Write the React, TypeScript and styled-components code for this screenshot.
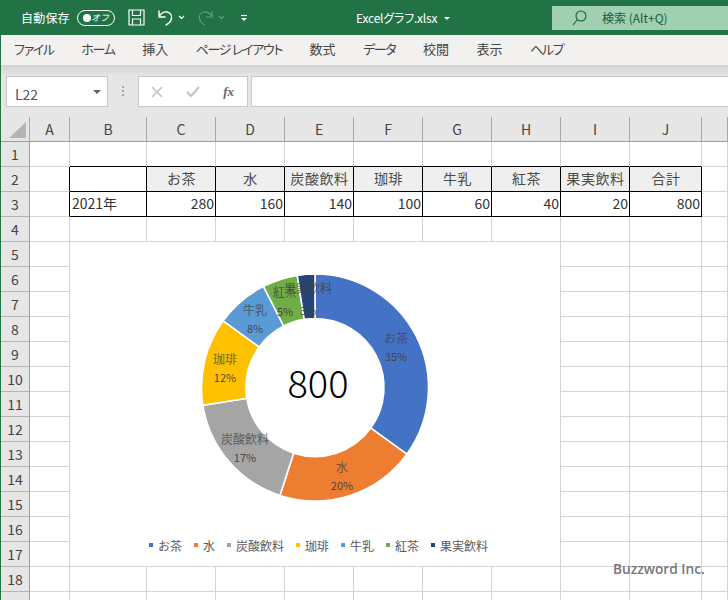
import styled, { createGlobalStyle } from "styled-components";

const JP = `"Noto Sans CJK JP", "Noto Sans", sans-serif`;

const GlobalStyle = createGlobalStyle`
  html, body {
    margin: 0;
    padding: 0;
    background: #fff;
  }
  * {
    box-sizing: border-box;
  }
`;

const Page = styled.div`
  position: relative;
  width: 728px;
  height: 600px;
  overflow: hidden;
  font-family: ${JP};
  border-left: 1px solid #217346;
`;

const TitleBar = styled.div`
  display: flex;
  align-items: center;
  height: 35px;
  padding-left: 21px;
  background: #217346;
  color: #fff;
  margin-left: -1px;
`;

const AutoSave = styled.span`
  width: 56px;
  font-size: 12px;
  font-feature-settings: "palt";
  letter-spacing: 0.2px;
`;

const Toggle = styled.div`
  display: flex;
  align-items: center;
  justify-content: space-between;
  width: 38px;
  height: 16px;
  padding: 0 5px 0 5px;
  margin-right: 13px;
  border: 1px solid #fff;
  border-radius: 8px;
  font-size: 9px;
  font-style: italic;
  &::before {
    content: "";
    width: 8px;
    height: 8px;
    border-radius: 50%;
    background: #fff;
  }
`;

const QuickIcon = styled.svg<{ $dim?: boolean; $gap: number }>`
  flex: none;
  margin-right: ${(p) => p.$gap}px;
  fill: none;
  stroke: #fff;
  stroke-width: 1.2;
  opacity: ${(p) => (p.$dim ? 0.3 : 1)};
`;

const FileName = styled.div`
  display: flex;
  align-items: center;
  width: 196px;
  margin-left: 108px;
  font-size: 12px;
  font-feature-settings: "palt";
  letter-spacing: -0.2px;
  &::after {
    content: "";
    margin-left: 7px;
    margin-top: 2px;
    border: 3px solid transparent;
    border-top: 3px solid #fff;
    border-bottom: 0;
  }
`;

const SearchBox = styled.div`
  display: flex;
  align-items: center;
  flex: 1;
  height: 24px;
  padding-left: 20px;
  background: #a0cfb1;
  color: #1d5c39;
  font-size: 12px;
  gap: 15px;
`;

const MenuBar = styled.nav`
  display: flex;
  align-items: center;
  gap: 27.5px;
  height: 30px;
  padding: 0 0 3px 13px;
  background: #f3f1f0;
  color: #444;
  font-size: 13px;
  font-feature-settings: "palt";
`;

const MenuItem = styled.span<{ $kana?: boolean }>`
  letter-spacing: ${(p) => (p.$kana ? "-1.3px" : "0")};
  white-space: nowrap;
`;

const FormulaArea = styled.div`
  display: flex;
  align-items: flex-start;
  height: 52px;
  padding: 11px 0 0 5px;
  background: linear-gradient(#d2d2d2, #e6e6e6 11px);
`;

const NameBox = styled.div`
  display: flex;
  align-items: center;
  justify-content: space-between;
  width: 102px;
  height: 31px;
  padding: 5px 6px 0 8px;
  background: #fff;
  border: 1px solid #c8c8c8;
  color: #555;
  font-size: 14px;
  &::after {
    content: "";
    margin-top: -5px;
    border: 4px solid transparent;
    border-top: 4px solid #666;
    border-bottom: 0;
  }
`;

const Grip = styled.div`
  width: 2px;
  height: 10px;
  margin: 10px 14px 0 14px;
  border-left: 2px dotted #aaa;
`;

const FormulaButtons = styled.div`
  display: flex;
  align-items: center;
  justify-content: space-between;
  width: 110px;
  height: 31px;
  padding: 0 13px 0 12px;
  margin-right: 3px;
  background: #fff;
  border: 1px solid #c8c8c8;
`;

const FxLabel = styled.span`
  font-family: "Liberation Serif", serif;
  font-size: 13px;
  font-style: italic;
  font-weight: 700;
  color: #666;
`;

const FormulaInput = styled.div`
  flex: 1;
  height: 31px;
  background: #fff;
  border: 1px solid #c8c8c8;
  border-right: 0;
`;

const Sheet = styled.div`
  display: grid;
  grid-template-columns: 29px 40px 77px 69px 69px 69px 69px 69px 69px 69px 72px 26px;
  grid-auto-rows: 25px;
  color: #333;
  font-size: 14px;
`;

const Corner = styled.div`
  display: flex;
  align-items: flex-end;
  justify-content: flex-end;
  padding: 0 3px 3px 0;
  background: #e6e6e6;
  border-right: 1px solid #a8a8a8;
  border-bottom: 1px solid #9c9c9c;
  &::after {
    content: "";
    border-style: solid;
    border-width: 0 0 16px 17px;
    border-color: transparent transparent #b4b4b4 transparent;
  }
`;

const ColHead = styled.div`
  display: flex;
  align-items: center;
  justify-content: center;
  background: #e6e6e6;
  border-right: 1px solid #a8a8a8;
  border-bottom: 1px solid #9c9c9c;
  color: #444;
`;

const RowHead = styled.div`
  display: flex;
  align-items: center;
  justify-content: center;
  background: #e6e6e6;
  border-right: 1px solid #9c9c9c;
  border-bottom: 1px solid #b4b4b4;
  color: #444;
`;

const Cell = styled.div<{
  $align?: string;
  $head?: boolean;
  $right?: boolean;
  $bottom?: boolean;
}>`
  display: flex;
  align-items: center;
  justify-content: ${(p) => p.$align || "flex-start"};
  padding: 0 1px 2px 2px;
  background: ${(p) => (p.$head ? "#efefef" : "#fff")};
  border-right: 1px solid ${(p) => (p.$right ? "#000" : "#d4d4d4")};
  border-bottom: 1px solid ${(p) => (p.$bottom ? "#000" : "#d4d4d4")};
  color: ${(p) => (p.$head ? "#4a4a4a" : "#333")};
  letter-spacing: ${(p) => (p.$head ? "0.6px" : "0")};
  white-space: nowrap;
`;

const ChartPanel = styled.div`
  position: absolute;
  left: 69px;
  top: 242px;
  width: 490px;
  height: 324px;
  background: #fff;
`;

const DonutSvg = styled.svg`
  display: block;
`;

const Legend = styled.div`
  display: flex;
  align-items: center;
  height: 18px;
  padding-left: 79px;
  color: #595959;
  font-size: 12px;
`;

const LegendItem = styled.span<{ $color: string }>`
  display: flex;
  align-items: center;
  margin-right: 12px;
  white-space: nowrap;
  &::before {
    content: "";
    width: 4px;
    height: 4px;
    margin-right: 5px;
    background: ${(p) => p.$color};
  }
`;

const Watermark = styled.div`
  position: absolute;
  left: 612px;
  top: 559px;
  color: #77777a;
  font-family: "Open Sans", sans-serif;
  font-size: 13.7px;
  font-weight: 600;
  white-space: nowrap;
`;

const menus = [
  { label: "ファイル", kana: true },
  { label: "ホーム", kana: true },
  { label: "挿入" },
  { label: "ページ レイアウト", kana: true },
  { label: "数式" },
  { label: "データ", kana: true },
  { label: "校閲" },
  { label: "表示" },
  { label: "ヘルプ", kana: true },
];
const columns = ["A", "B", "C", "D", "E", "F", "G", "H", "I", "J", ""];
const headers = ["お茶", "水", "炭酸飲料", "珈琲", "牛乳", "紅茶", "果実飲料", "合計"];
const values = [280, 160, 140, 100, 60, 40, 20, 800];

// slice label positions are in chart coordinates, read off the screenshot
const slices = [
  { name: "お茶", value: 280, pct: "35%", color: "#4472c4", x: 326, y: 97, py: 115 },
  { name: "水", value: 160, pct: "20%", color: "#ed7d31", x: 272, y: 226, py: 244 },
  { name: "炭酸飲料", value: 140, pct: "17%", color: "#a5a5a5", x: 175, y: 198, py: 216 },
  { name: "珈琲", value: 100, pct: "12%", color: "#ffc000", x: 155, y: 118, py: 136 },
  { name: "牛乳", value: 60, pct: "8%", color: "#5b9bd5", x: 185, y: 69, py: 87 },
  { name: "紅茶", value: 40, pct: "5%", color: "#70ad47", x: 215, y: 51, py: 70 },
  { name: "果実飲料", value: 20, pct: "3%", color: "#264478", x: 238, y: 47, py: 69 },
];

const CX = 245;
const CY = 145.5;
const R_OUT = 113.5;
const R_IN = 69;

const point = (r: number, turn: number) => {
  const a = turn * 2 * Math.PI;
  return `${(CX + r * Math.sin(a)).toFixed(2)} ${(CY - r * Math.cos(a)).toFixed(2)}`;
};

const slicePath = (from: number, to: number) => {
  const large = to - from > 0.5 ? 1 : 0;
  return [
    `M${point(R_OUT, from)}`,
    `A${R_OUT} ${R_OUT} 0 ${large} 1 ${point(R_OUT, to)}`,
    `L${point(R_IN, to)}`,
    `A${R_IN} ${R_IN} 0 ${large} 0 ${point(R_IN, from)}`,
    "Z",
  ].join(" ");
};

const Donut = () => {
  let sum = 0;
  return (
    <DonutSvg width={490} height={294} viewBox="0 0 490 294">
      {slices.map((s) => {
        const from = sum / 800;
        sum += s.value;
        return <path key={s.name} d={slicePath(from, sum / 800)} fill={s.color} stroke="#fff" strokeWidth={1.6} />;
      })}
      {slices.map((s) => (
        <g key={s.name} fill="#404040" textAnchor="middle">
          <text x={s.x} y={s.y + 4} fontSize={12} fillOpacity={0.75}>{s.name}</text>
          <text x={s.x} y={s.py + 4} fontSize={11} fillOpacity={0.95}>{s.pct}</text>
        </g>
      ))}
      <text x={248} y={156} fontSize={38} fontWeight={300} textAnchor="middle" fill="#000">800</text>
    </DonutSvg>
  );
};

const rowCells = (row: number) => {
  const cells = [];
  for (let c = 0; c < 11; c++) {
    const inBox = c >= 1 && c <= 9;
    const isBoxRow = row === 2 || row === 3;
    const right = isBoxRow && c <= 9;
    const bottom = inBox && (row === 1 || isBoxRow);
    let text: string | number = "";
    let align = "flex-start";
    const dataIdx = c - 2;
    if (row === 2 && dataIdx >= 0 && dataIdx < 8) {
      text = headers[dataIdx];
      align = "center";
    } else if (row === 3 && c === 1) {
      text = "2021年";
    } else if (row === 3 && dataIdx >= 0 && dataIdx < 8) {
      text = values[dataIdx];
      align = "flex-end";
    }
    cells.push(
      <Cell key={c} $align={align} $head={row === 2 && dataIdx >= 0 && dataIdx < 8} $right={right} $bottom={bottom}>
        {text}
      </Cell>
    );
  }
  return cells;
};

const App = () => {
  const rows = Array.from({ length: 19 }, (_, i) => i + 1);
  return (
    <Page>
      <GlobalStyle />
      <TitleBar>
        <AutoSave>自動保存</AutoSave>
        <Toggle>オフ</Toggle>
        <QuickIcon $gap={12} width={17} height={17} viewBox="0 0 17 17">
          <path d="M1 1h15v15H1z" />
          <path d="M4.5 1v5.5h8V1M4.5 16v-6h8v6" />
        </QuickIcon>
        <QuickIcon $gap={4} width={17} height={17} viewBox="0 0 17 17" strokeLinecap="round">
          <path d="M2 2v6h6M2 7.5C4 4.5 7 2.500 10 3c3.500.6 5 3.500 4.500 6.500C14 12 12 14.500 9 16" strokeWidth={1.4} />
        </QuickIcon>
        <QuickIcon $gap={12} width={7} height={5} viewBox="0 0 7 5">
          <path d="M1 1l2.500 2.500L6 1" />
        </QuickIcon>
        <QuickIcon $dim $gap={4} width={17} height={17} viewBox="0 0 17 17">
          <path d="M15 2v6H9M15 7.500C13 4.500 10 2.500 7 3 3.500 3.600 2 6.500 2.500 9.500 3 12 5 14.500 8 16" />
        </QuickIcon>
        <QuickIcon $dim $gap={15} width={7} height={5} viewBox="0 0 7 5">
          <path d="M1 1l2.500 2.500L6 1" />
        </QuickIcon>
        <QuickIcon $gap={0} width={8} height={8} viewBox="0 0 8 8">
          <path d="M1 1.500h6" />
          <path d="M1 4l3 3 3-3z" fill="#fff" stroke="none" />
        </QuickIcon>
        <FileName>Excelグラフ.xlsx</FileName>
        <SearchBox>
          <svg width={15} height={16} viewBox="0 0 15 16" fill="none" stroke="#1d5c39" strokeWidth={1.1}>
            <circle cx={9} cy={6} r={5} />
            <path d="M5.500 9.500L1 15" />
          </svg>
          <span>検索 (Alt+Q)</span>
        </SearchBox>
      </TitleBar>
      <MenuBar>
        {menus.map((m) => (
          <MenuItem key={m.label} $kana={m.kana}>{m.label}</MenuItem>
        ))}
      </MenuBar>
      <FormulaArea>
        <NameBox>L22</NameBox>
        <Grip />
        <FormulaButtons>
          <svg width={12} height={12} viewBox="0 0 12 12" stroke="#c4c4c4" strokeWidth={1.6}>
            <path d="M1 1l10 10M11 1L1 11" />
          </svg>
          <svg width={14} height={12} viewBox="0 0 14 12" fill="none" stroke="#c4c4c4" strokeWidth={2}>
            <path d="M1 6l4 4 8-9" />
          </svg>
          <FxLabel>fx</FxLabel>
        </FormulaButtons>
        <FormulaInput />
      </FormulaArea>
      <Sheet>
        <Corner />
        {columns.map((c, i) => (
          <ColHead key={i}>{c}</ColHead>
        ))}
        {rows.map((r) => (
          <RowGroup key={r} row={r} />
        ))}
      </Sheet>
      <ChartPanel>
        <Donut />
        <Legend>
          {slices.map((s) => (
            <LegendItem key={s.name} $color={s.color}>
              {s.name}
            </LegendItem>
          ))}
        </Legend>
      </ChartPanel>
      <Watermark>Buzzword Inc.</Watermark>
    </Page>
  );
};

const RowGroup = ({ row }: { row: number }) => (
  <>
    <RowHead>{row}</RowHead>
    {rowCells(row)}
  </>
);

export default App;
